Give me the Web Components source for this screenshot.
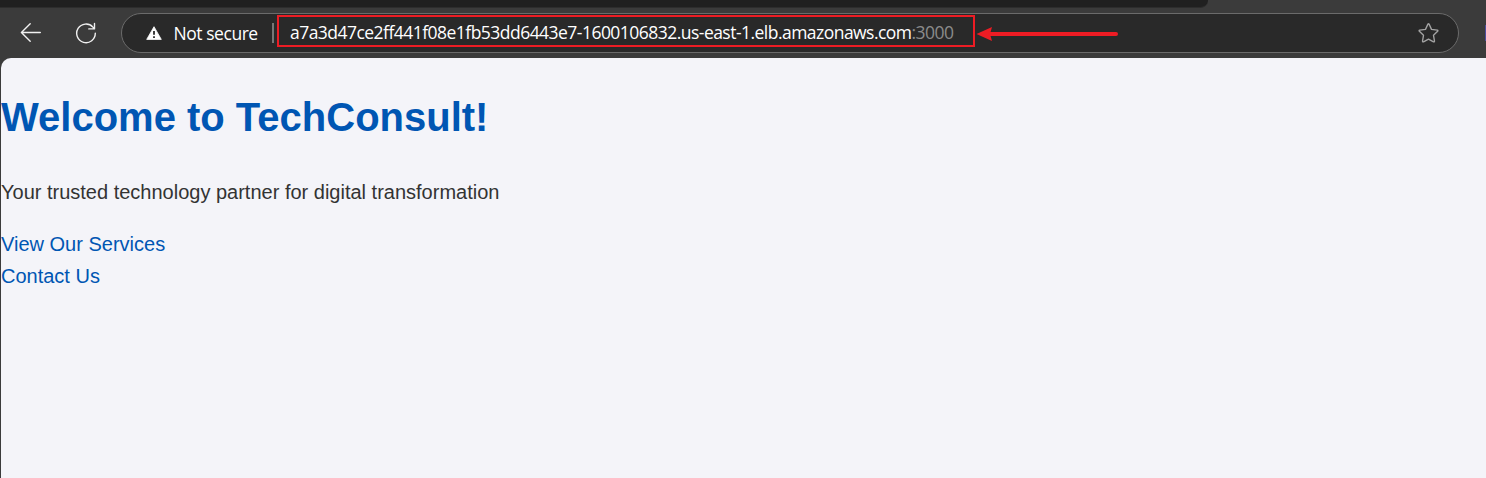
<!DOCTYPE html>
<html lang="en">
<head>
<meta charset="utf-8">
<title>TechConsult</title>
<style>
html,body{margin:0;height:100%;overflow:hidden;background:#3b3b3b}
</style>
</head>
<body>
<browser-window></browser-window>
<script>
const define = (name, html) => customElements.define(name, class extends HTMLElement {
  constructor() {
    super();
    this.attachShadow({mode: 'open'}).innerHTML = html;
  }
});

define('tab-strip', `<style>
:host{display:block;height:8px;background:#3b3b3b}
div{width:1208px;height:8px;background:#202020;border-bottom-right-radius:8px 7px;border-bottom:1px solid #2d2d2d;box-sizing:border-box}
</style><div></div>`);

define('back-icon', `<style>:host{display:block;width:22px;height:22px}svg{display:block}</style>
<svg width="22" height="22" viewBox="0 0 22 22" fill="none" stroke="#f0f0f0" stroke-width="1.4" stroke-linecap="round" stroke-linejoin="round"><path d="M20.3 10.5H1.4M10.2 1.8L1.4 10.5L10.2 19.2"/></svg>`);

define('reload-icon', `<style>:host{display:block;width:22px;height:22px}svg{display:block}</style>
<svg width="22" height="22" viewBox="0 0 22 22" fill="none" stroke="#f0f0f0" stroke-width="1.4" stroke-linecap="round" stroke-linejoin="round"><path d="M20.3 11.2A9.3 9.3 0 1 1 17.9 5.1L19.4 6.8M19.5 1.5V6.9H13.8"/></svg>`);

define('warning-icon', `<style>:host{display:block;width:16px;height:14px}svg{display:block}</style>
<svg width="16" height="14" viewBox="0 0 16 14"><path d="M8 .7L15.3 13.4H.7Z" fill="#fff" stroke="#fff" stroke-width=".8" stroke-linejoin="round"/><path d="M8 4.9V8.8M8 10.2V12" stroke="#292929" stroke-width="1.8"/></svg>`);

define('star-icon', `<style>:host{display:block;width:22px;height:22px}svg{display:block}</style>
<svg width="22" height="22" viewBox="0 0 22 22" fill="none" stroke="#a3a3a3" stroke-width="1.35" stroke-linejoin="round"><path transform="translate(-.5 .3)" d="M10.4 1.8Q11 .8 11.6 1.8L14 7.1L19.8 7.9Q20.9 8.2 20.1 9L16 13L17 18.8Q17 20 16 19.5L11 16.8L6 19.5Q5 20 5 18.8L6 13L1.9 9Q1.1 8.2 2.2 7.9L8 7.1Z"/></svg>`);

define('url-highlight', `<style>
:host{display:flex;box-sizing:border-box;width:698px;height:32px;border:2px solid #ed1c24;align-items:center;padding:2px 0 0 11px;white-space:nowrap;position:relative}
svg{position:absolute;left:697px;top:9px}
</style><slot></slot>
<svg width="146" height="16" viewBox="0 0 146 16"><path d="M14 8H140" stroke="#ed1c24" stroke-width="4" stroke-linecap="round"/><path d="M.5 8L16 1L14 8L16 15Z" fill="#ed1c24"/></svg>`);

define('address-bar', `<style>
:host{display:flex;box-sizing:border-box;width:1338px;height:40px;border:1px solid #6b6b6b;border-radius:20px;background:#292929;align-items:center;padding-left:24px;font:17.5px/24px "Open Sans","Noto Sans",sans-serif;color:#fff}
.label{width:98.5px;margin:-1px 0 0 11.5px;white-space:nowrap;letter-spacing:-.45px}
.rule{width:2px;height:20px;background:#777;margin-right:3px}
.url{letter-spacing:-.53px}.port{color:#8b8b8b}
url-highlight{margin:-4px 0 0 0}
star-icon{margin-left:auto;margin-right:18px}
</style>
<warning-icon></warning-icon><span class="label">Not secure</span><span class="rule"></span>
<url-highlight><span class="url">a7a3d47ce2ff441f08e1fb53dd6443e7-1600106832.us-east-1.elb.amazonaws.com<span class="port">:3000</span></span></url-highlight>
<star-icon></star-icon>`);

define('browser-toolbar', `<style>
:host{display:flex;height:50px;box-sizing:border-box;background:#3b3b3b;padding:5px 0 5px 20px}
back-icon{margin-top:9px}reload-icon{margin:9px 0 0 33px}
address-bar{margin-left:24px}
.edge{width:1px;height:16px;margin:12px 0 0 auto;background:#4c4c9c}
</style><back-icon></back-icon><reload-icon></reload-icon><address-bar></address-bar><span class="edge"></span>`);

define('page-content', `<style>
:host{display:flow-root;box-sizing:border-box;flex:1;margin-left:1px;background:#f4f4f9;border-top-left-radius:10px;font:20px/32px "Liberation Sans",Arial,sans-serif;color:#333}
h1{margin:26.8px 0;font-size:40px;line-height:64px;color:#0056b3}
p{margin:20px 0}
a{display:block;width:max-content;color:#0056b3;text-decoration:none}
</style><h1>Welcome to TechConsult!</h1><p>Your trusted technology partner for digital transformation</p>
<nav><a href="#services">View Our Services</a><a href="#contact">Contact Us</a></nav>`);

define('browser-window', `<style>:host{display:flex;flex-direction:column;height:100vh}</style>
<tab-strip></tab-strip><browser-toolbar></browser-toolbar><page-content></page-content>`);
</script>
</body>
</html>
